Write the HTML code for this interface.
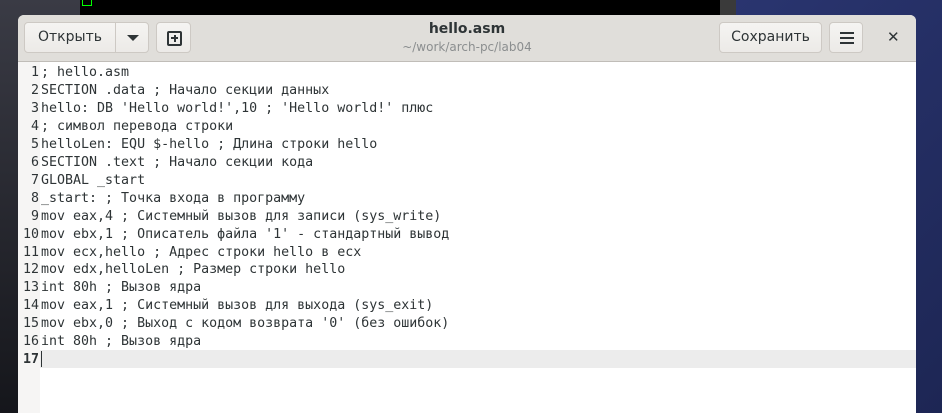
<!DOCTYPE html>
<html><head><meta charset="utf-8"><style>
html,body{margin:0;padding:0;width:942px;height:413px;overflow:hidden;background:#1a1c24;font-family:"DejaVu Sans","Liberation Sans",sans-serif;}
.bgl{position:absolute;left:0;top:0;width:80px;height:413px;background:linear-gradient(#3a3b45,#15161b);}
.bgt{position:absolute;left:80px;top:0;width:640px;height:16px;background:#000;}
.bgt2{position:absolute;left:720px;top:0;width:222px;height:413px;background:linear-gradient(135deg,#2a3570,#1d2654);}
.strip{position:absolute;left:720px;top:0;width:16px;height:16px;background:#3a3a3a}
.win{position:absolute;left:18px;top:15px;width:898px;height:398px;background:#fff;border-radius:6px 6px 0 0;overflow:hidden;}
.hdr{position:absolute;left:0;top:0;width:898px;height:46px;background:#e0deda;border-bottom:1px solid #c0bdb8;}
.btn{position:absolute;top:7px;height:31px;background:linear-gradient(#f5f4f2,#eceae7);border:1px solid #cdc9c4;border-radius:4px;box-sizing:border-box;font-size:14px;color:#2e3436;line-height:29px;text-align:center;}
.title{position:absolute;left:0;width:898px;text-align:center;}
.gut{position:absolute;left:0;top:47px;width:22px;height:400px;background:#f6f5f4;}
.cur{position:absolute;left:22px;top:335px;width:876px;height:18px;background:#ececec;}
.code{position:absolute;left:0;top:49px;font-family:"DejaVu Sans Mono","Liberation Mono",monospace;font-size:13.3px;line-height:17.95px;color:#2e3436;white-space:pre;}
.code .n{display:inline-block;width:21px;text-align:right;color:#2e3436;margin-right:2px;}
</style></head><body>
<div class="bgl"></div><div class="bgt"></div><div class="bgt2"></div><div class="strip"></div>
<div style="position:absolute;left:82px;top:0;width:8px;height:5px;border:1px solid #0f0;border-top:none"></div>
<div class="win">
<div class="hdr">
<div class="btn" style="left:6px;width:125px;"><span style="position:absolute;left:0;width:90px">Открыть</span><span style="position:absolute;left:90px;top:0;bottom:0;border-left:1px solid #cdc9c4;width:34px"></span><span style="position:absolute;left:102px;top:12px;width:0;height:0;border-left:6px solid transparent;border-right:6px solid transparent;border-top:6px solid #2e3436"></span></div>
<div class="btn" style="left:138px;width:35px;"><span style="position:absolute;left:10px;top:8px;width:11px;height:11px;border:2px solid #2e3436;border-radius:2px"></span><span style="position:absolute;left:14px;top:14px;width:7px;height:2px;background:#2e3436"></span><span style="position:absolute;left:16.5px;top:11.5px;width:2px;height:7px;background:#2e3436"></span></div>
<div class="title" style="top:6px;font-size:14px;font-weight:bold;color:#2e3436">hello.asm</div>
<div class="title" style="top:25px;font-size:12px;color:#8b8e8f">~/work/arch-pc/lab04</div>
<div class="btn" style="left:701px;width:103px;">Сохранить</div>
<div class="btn" style="left:811px;width:34px;"><span style="position:absolute;left:10px;top:9px;width:14px;height:2px;background:#2e3436;box-shadow:0 5px 0 #2e3436,0 10px 0 #2e3436"></span></div>
<div style="position:absolute;left:869px;top:13px;font-size:15px;font-weight:bold;color:#2e3436">✕</div>
</div>
<div class="gut"></div><div class="cur"></div>
<div style="position:absolute;left:23px;top:336px;width:1px;height:16px;background:#2e3436"></div>
<div class="code"><span class="n">1</span>; hello.asm
<span class="n">2</span>SECTION .data ; Начало секции данных
<span class="n">3</span>hello: DB 'Hello world!',10 ; 'Hello world!' плюс
<span class="n">4</span>; символ перевода строки
<span class="n">5</span>helloLen: EQU $-hello ; Длина строки hello
<span class="n">6</span>SECTION .text ; Начало секции кода
<span class="n">7</span>GLOBAL _start
<span class="n">8</span>_start: ; Точка входа в программу
<span class="n">9</span>mov eax,4 ; Системный вызов для записи (sys_write)
<span class="n">10</span>mov ebx,1 ; Описатель файла '1' - стандартный вывод
<span class="n">11</span>mov ecx,hello ; Адрес строки hello в ecx
<span class="n">12</span>mov edx,helloLen ; Размер строки hello
<span class="n">13</span>int 80h ; Вызов ядра
<span class="n">14</span>mov eax,1 ; Системный вызов для выхода (sys_exit)
<span class="n">15</span>mov ebx,0 ; Выход с кодом возврата '0' (без ошибок)
<span class="n">16</span>int 80h ; Вызов ядра
<span class="n" style="font-weight:bold">17</span></div>
</div>
</body></html>
